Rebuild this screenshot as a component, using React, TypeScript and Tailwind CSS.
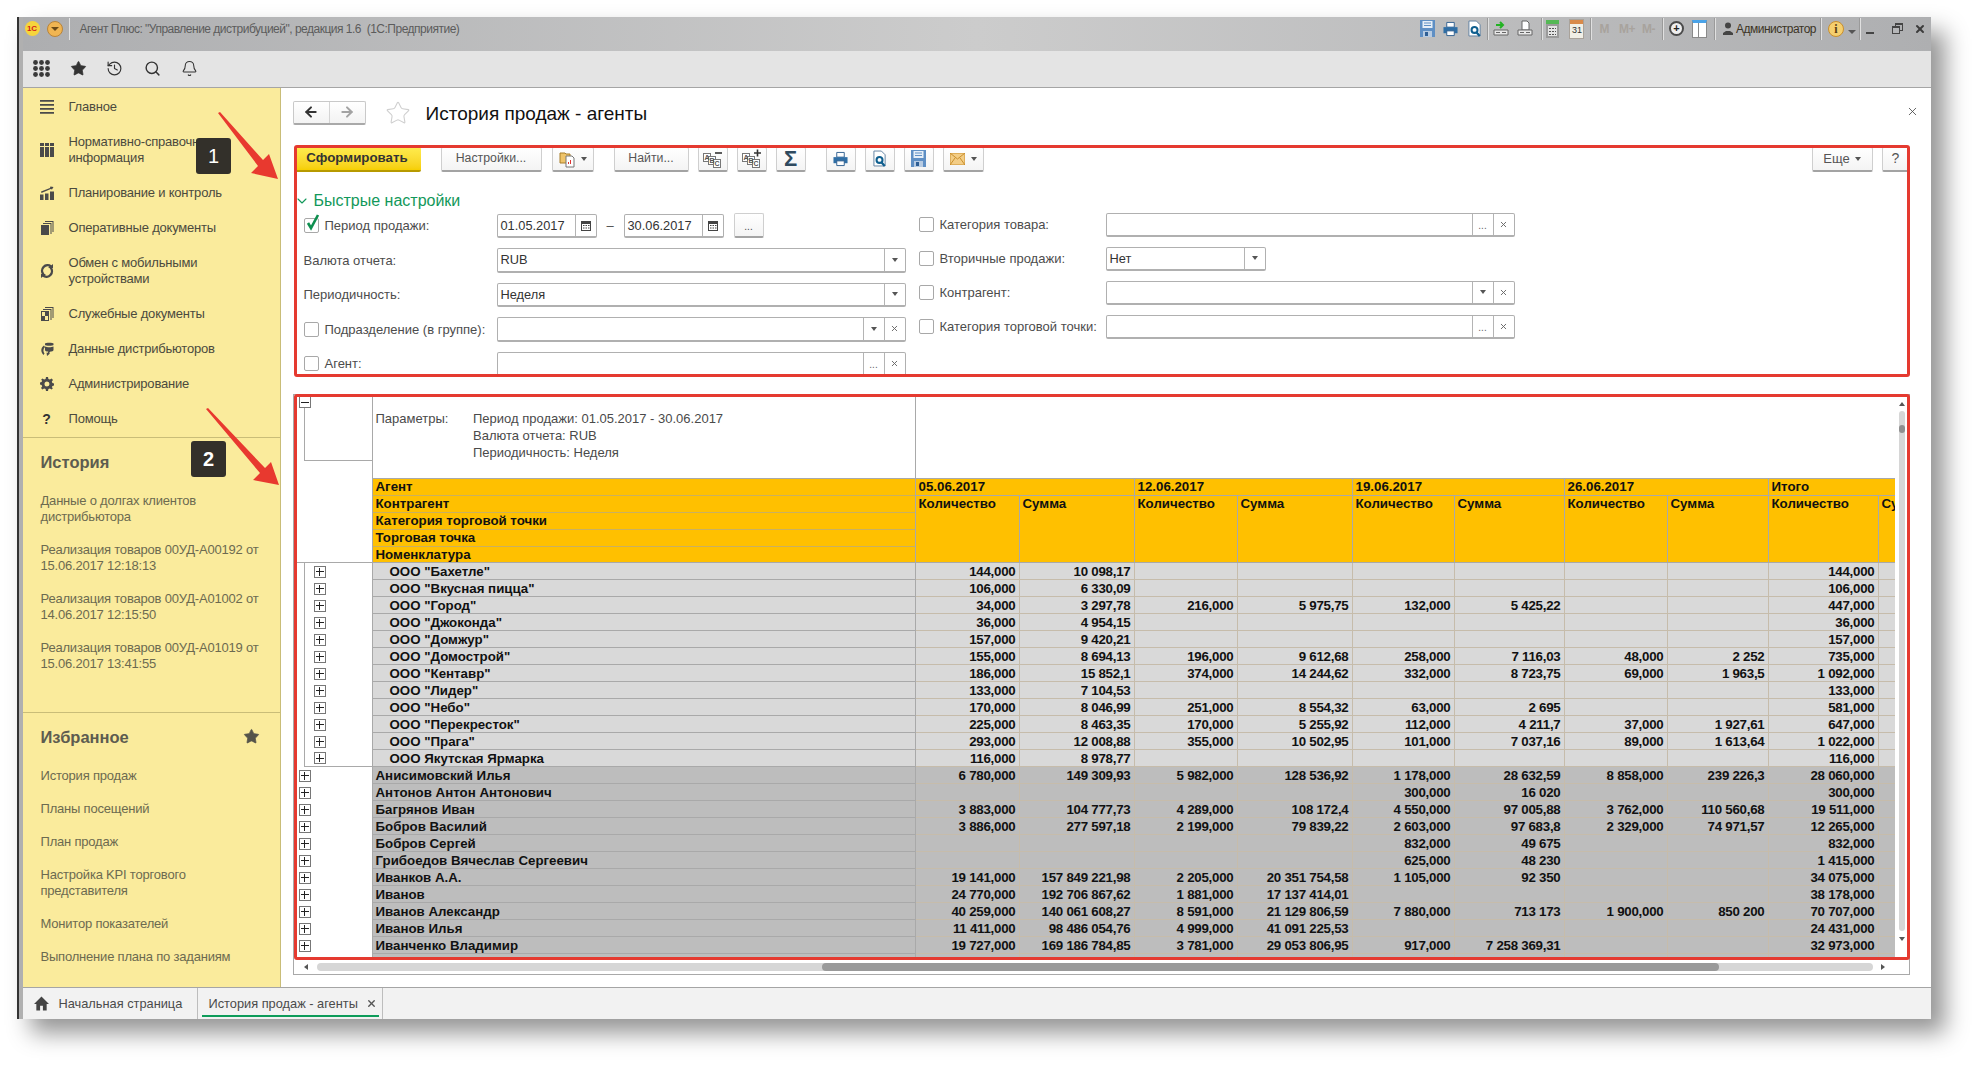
import React from 'react';
import { ArrowLeft, ArrowRight, Bell, ChevronDown, History, Search, Star, X } from 'lucide-react';

const sideMain: { label: string[]; icon: string }[] = [
  { label: ['Главное'], icon: 'menu' },
  { label: ['Нормативно-справочная', 'информация'], icon: 'books' },
  { label: ['Планирование и контроль'], icon: 'chart' },
  { label: ['Оперативные документы'], icon: 'docs' },
  { label: ['Обмен с мобильными', 'устройствами'], icon: 'sync' },
  { label: ['Служебные документы'], icon: 'service' },
  { label: ['Данные дистрибьюторов'], icon: 'dist' },
  { label: ['Администрирование'], icon: 'gear' },
  { label: ['Помощь'], icon: 'help' },
];

const historyItems = [
  ['Данные о долгах клиентов', 'дистрибьютора'],
  ['Реализация товаров 00УД-А00192 от', '15.06.2017 12:18:13'],
  ['Реализация товаров 00УД-А01002 от', '14.06.2017 12:15:50'],
  ['Реализация товаров 00УД-А01019 от', '15.06.2017 13:41:55'],
];

const favItems = [
  ['История продаж'],
  ['Планы посещений'],
  ['План продаж'],
  ['Настройка KPI торгового', 'представителя'],
  ['Монитор показателей'],
  ['Выполнение плана по заданиям'],
];

const subRows: string[][] = [
  ['ООО "Бахетле"', '144,000', '10 098,17', '', '', '', '', '', '', '144,000'],
  ['ООО "Вкусная пицца"', '106,000', '6 330,09', '', '', '', '', '', '', '106,000'],
  ['ООО "Город"', '34,000', '3 297,78', '216,000', '5 975,75', '132,000', '5 425,22', '', '', '447,000'],
  ['ООО "Джоконда"', '36,000', '4 954,15', '', '', '', '', '', '', '36,000'],
  ['ООО "Домжур"', '157,000', '9 420,21', '', '', '', '', '', '', '157,000'],
  ['ООО "Домострой"', '155,000', '8 694,13', '196,000', '9 612,68', '258,000', '7 116,03', '48,000', '2 252', '735,000'],
  ['ООО "Кентавр"', '186,000', '15 852,1', '374,000', '14 244,62', '332,000', '8 723,75', '69,000', '1 963,5', '1 092,000'],
  ['ООО "Лидер"', '133,000', '7 104,53', '', '', '', '', '', '', '133,000'],
  ['ООО "Небо"', '170,000', '8 046,99', '251,000', '8 554,32', '63,000', '2 695', '', '', '581,000'],
  ['ООО "Перекресток"', '225,000', '8 463,35', '170,000', '5 255,92', '112,000', '4 211,7', '37,000', '1 927,61', '647,000'],
  ['ООО "Прага"', '293,000', '12 008,88', '355,000', '10 502,95', '101,000', '7 037,16', '89,000', '1 613,64', '1 022,000'],
  ['ООО Якутская Ярмарка', '116,000', '8 978,77', '', '', '', '', '', '', '116,000'],
];

const agentRows: string[][] = [
  ['Анисимовский Илья', '6 780,000', '149 309,93', '5 982,000', '128 536,92', '1 178,000', '28 632,59', '8 858,000', '239 226,3', '28 060,000'],
  ['Антонов Антон Антонович', '', '', '', '', '300,000', '16 020', '', '', '300,000'],
  ['Багрянов Иван', '3 883,000', '104 777,73', '4 289,000', '108 172,4', '4 550,000', '97 005,88', '3 762,000', '110 560,68', '19 511,000'],
  ['Бобров Василий', '3 886,000', '277 597,18', '2 199,000', '79 839,22', '2 603,000', '97 683,8', '2 329,000', '74 971,57', '12 265,000'],
  ['Бобров Сергей', '', '', '', '', '832,000', '49 675', '', '', '832,000'],
  ['Грибоедов Вячеслав Сергеевич', '', '', '', '', '625,000', '48 230', '', '', '1 415,000'],
  ['Иванков А.А.', '19 141,000', '157 849 221,98', '2 205,000', '20 351 754,58', '1 105,000', '92 350', '', '', '34 075,000'],
  ['Иванов', '24 770,000', '192 706 867,62', '1 881,000', '17 137 414,01', '', '', '', '', '38 178,000'],
  ['Иванов Александр', '40 259,000', '140 061 608,27', '8 591,000', '21 129 806,59', '7 880,000', '713 173', '1 900,000', '850 200', '70 707,000'],
  ['Иванов Илья', '11 411,000', '98 486 054,76', '4 999,000', '41 091 225,53', '', '', '', '', '24 431,000'],
  ['Иванченко Владимир', '19 727,000', '169 186 784,85', '3 781,000', '29 053 806,95', '917,000', '7 258 369,31', '', '', '32 973,000'],
  ['Кузнецов Борис', '9 349,000', '99 480', '5 230,000', '155 330,9', '9 789,000', '189 240,8', '8 858,000', '189 784,85', '38 190,000'],
];

const headLabels = ['Агент', 'Контрагент', 'Категория торговой точки', 'Торговая точка', 'Номенклатура'];
const cols = 'grid grid-cols-[104px_115px_103px_115px_102px_110px_103px_101px_110px_19px]';

function SideIcon({ name }: { name: string }) {
  if (name === 'help') return <span className="w-[14px] text-center text-[14px] font-bold text-[#333]">?</span>;
  if (name === 'sync') {
    return (
      <svg viewBox="0 0 14 16" className="h-[16px] w-[14px]" fill="none" stroke="#4a4a4a" strokeWidth="2.400">
        <path d="M11 3.500A5.500 5.500 0 0 0 3.500 11.500" />
        <path d="M3 12.500A5.500 5.500 0 0 0 10.500 4.500" />
        <path d="M8 5h5V1zM6 11H1v4z" fill="#4a4a4a" stroke="none" />
      </svg>
    );
  }
  return (
    <svg viewBox="0 0 14 14" className="h-[14px] w-[14px]" fill="#4a4a4a">
      {name === 'menu' && <path d="M0 0h14v1.800H0zM0 4h14v1.800H0zM0 8h14v1.800H0zM0 12h14v1.800H0z" />}
      {name === 'books' && <path d="M0 0h4v3H0zM5 0h4v3H5zM10 0h4v3h-4zM0 4h4v10H0zM5 4h4v10H5zM10 4h4v10h-4z" />}
      {name === 'chart' && <path d="M0 8.500h3.500V14H0zM5 7.500h3.500V14H5zM10 5.500h4V14h-4zM1 5.500l9-3.500.4-1.500 3.100.6-1.500 2.400-1.200-.6L1.500 7z" />}
      {name === 'docs' && <path fillRule="evenodd" d="M5 0h8.500v11h-1V1H5zM3 2h8.500v11h-1V3H3zM1 4h8v10H1z" />}
      {name === 'service' && <path fillRule="evenodd" d="M5 0h8.500v11h-1V1H5zM3 2h8.500v11h-1V3H3zM1 4h8v10H1zM5 5v4H2V5zM5 9h3v4H5z" />}
      {name === 'dist' && <path d="M5 1.500C5 .500 13.500.500 13.500 1.500V3C13.500 4 5 4 5 3zM5 4.500c2 1 6.500 1 8.500 0V8c0 1-2 1.500-3 1.500L9 11l1 .500L7 14l-.5-3.500 1 .5.8-1.500C6.500 9.500 5 9 5 8zM4 3.500 5 5C3 7 3 9.500 4.500 11.500L3.500 13C.5 10 .5 6 4 3.500z" />}
      {name === 'gear' && <path fillRule="evenodd" d="M6 0h2l.4 2 1.500.6L11.600 1.500 13 3l-1.200 1.600.6 1.500 1.600.4v2l-1.600.4-.6 1.500L13 11l-1.400 1.500-1.700-1.100-1.500.6L8 14H6l-.4-2-1.500-.6-1.700 1.100L1 11l1.200-1.600-.6-1.500L0 7.500v-2l1.600-.4.6-1.500L1 3l1.400-1.500 1.700 1.100 1.500-.6zM7 4.500a2.500 2.500 0 1 0 0 5 2.500 2.500 0 0 0 0-5z" />}
    </svg>
  );
}

function BarSep() {
  return <div className="h-[22px] w-[2px] border-r border-[#e0e0e0] bg-[#9a9a9a]" />;
}

function FloppyIcon({ className }: { className: string }) {
  return (
    <svg viewBox="0 0 15 17" className={className}>
      <path d="M0 0h15v17H0z" fill="#5f8fc4" />
      <path d="M2.500 1h10v7h-10z" fill="#e6eef7" />
      <path d="M4 3h7M4 5.500h7" stroke="#5f8fc4" />
      <path d="M3 11h9v6H3z" fill="#b7cbe2" />
      <path d="M5 12h3v4H5z" fill="#2f5f95" />
    </svg>
  );
}

function PrinterIcon({ className }: { className: string }) {
  return (
    <svg viewBox="0 0 16 16" className={className}>
      <path d="M4 1h8v5H4z" fill="#fff" stroke="#2f5f8f" />
      <path d="M0.500 6h15v6.500H.5z" fill="#2f6ea5" />
      <path d="M4 10h8v5H4z" fill="#fff" stroke="#2f5f8f" />
    </svg>
  );
}

function PreviewIcon({ className }: { className: string }) {
  return (
    <svg viewBox="0 0 15 18" className={className}>
      <path d="M1 1h8l4 4v12H1z" fill="#fff" stroke="#5f7f9f" />
      <circle cx="7" cy="10.500" r="3.200" fill="none" stroke="#0f5f8f" strokeWidth="2.200" />
      <path d="M9 13 12.500 17" stroke="#0f5f8f" strokeWidth="2.400" />
    </svg>
  );
}

function AbcIcon({ sign }: { sign: string }) {
  return (
    <svg viewBox="0 0 20 20" className="h-[20px] w-[20px]" fontSize="7" fontWeight="bold" fontFamily="Liberation Sans, sans-serif" fill="#555">
      <rect x="0.500" y="4.500" width="7" height="8" fill="#fff" stroke="#777" />
      <rect x="5.500" y="7.500" width="7" height="8" fill="#fff" stroke="#777" />
      <rect x="10.500" y="10.500" width="7" height="8" fill="#fff" stroke="#777" />
      <text x="1.500" y="11">A</text>
      <text x="6.500" y="14">B</text>
      <text x="11.500" y="17">C</text>
      <path d={sign === '+' ? 'M12 4h7M15.500 .5v7' : 'M12 4h7'} stroke="#333" strokeWidth="1.600" />
    </svg>
  );
}

function TitleBar() {
  return (
    <div className="flex h-[34px] shrink-0 items-center bg-gradient-to-r from-[#adaeb0] via-[#cccccc] to-[#aeafb1] pb-[11px] pl-[2px]">
      <div className="flex h-[15px] w-[15px] items-center justify-center rounded-full bg-[#f6d53c] text-[8px] font-bold text-[#d3201a]">1С</div>
      <div className="ml-[7px] flex h-[16px] w-[16px] items-center justify-center rounded-full border border-[#b9843a] bg-[#f0b552]">
        <div className="h-0 w-0 border-x-[4px] border-t-[4px] border-x-transparent border-t-[#6b4a17]" />
      </div>
      <div className="ml-[6px] h-[22px] w-px bg-[#e2e2e2]" />
      <span className="ml-[10px] whitespace-pre text-[12px] tracking-[-0.5px] text-[#5c5c5c]">Агент Плюс: "Управление дистрибуцией", редакция 1.6  (1С:Предприятие)</span>
      <div className="ml-auto flex items-center pr-[5px]">
        <FloppyIcon className="h-[17px] w-[15px]" />
        <PrinterIcon className="ml-[8px] h-[16px] w-[15px]" />
        <PreviewIcon className="ml-[10px] h-[17px] w-[14px]" />
        <div className="ml-[5px]"><BarSep /></div>
        <svg viewBox="0 0 16 17" className="ml-[4px] h-[17px] w-[16px]">
          <path d="M1 10h14v5H1z" fill="#e8e8e8" stroke="#666" />
          <path d="M3 5h7M7 2l3 3-3 3" fill="none" stroke="#23b323" strokeWidth="2" />
          <path d="M3 12h4v1H3zM9 12h4v1H9z" fill="#666" />
        </svg>
        <svg viewBox="0 0 16 17" className="ml-[8px] h-[17px] w-[16px]">
          <path d="M5 1h5l2 2v7H5z" fill="#fff" stroke="#666" />
          <path d="M1 10h14v5H1z" fill="#e8e8e8" stroke="#666" />
          <path d="M3 12h4v1H3zM9 12h4v1H9z" fill="#666" />
        </svg>
        <div className="ml-[8px]"><BarSep /></div>
        <svg viewBox="0 0 13 18" className="ml-[3px] h-[18px] w-[13px]">
          <path d="M0 0h13v18H0z" fill="#9a9a9a" />
          <path d="M0 0h13v4H0z" fill="#55b855" />
          <path d="M2 6h9v10H2z" fill="#e4e4e4" />
          <path d="M3 8h2v1H3zM6 8h2v1H6zM9 8h1v1H9zM3 11h2v1H3zM6 11h2v1H6zM9 11h1v1H9zM3 14h2v1H3zM6 14h2v1H6zM9 14h1v1H9z" fill="#555" />
        </svg>
        <div className="ml-[11px] flex h-[18px] w-[13px] flex-col items-center bg-[#f1efe6] shadow-[0_0_0_1px_#a9a29a]">
          <div className="h-[4px] w-full bg-[#d98a4a]" />
          <span className="text-[9px] leading-[13px] text-[#333]">31</span>
        </div>
        <div className="ml-[7px]"><BarSep /></div>
        <span className="ml-[7px] text-[12px] font-bold tracking-[-0.5px] text-[#a8a39d]">M</span>
        <span className="ml-[10px] text-[12px] font-bold tracking-[-0.5px] text-[#a8a39d]">M+</span>
        <span className="ml-[7px] text-[12px] font-bold tracking-[-0.5px] text-[#a8a39d]">M-</span>
        <div className="ml-[7px]"><BarSep /></div>
        <div className="ml-[5px] flex h-[15px] w-[15px] items-center justify-center rounded-full border-2 border-[#4a4a4a] bg-[#eee] text-[11px] font-bold leading-none text-[#222]">+</div>
        <div className="ml-[8px] flex h-[18px] w-[15px] border border-t-[3px] border-[#8a8a8a] border-t-[#4aa3e8] bg-white">
          <div className="w-1/2 border-r border-[#8a8a8a]" />
        </div>
        <div className="ml-[7px]"><BarSep /></div>
        <svg viewBox="0 0 10 13" className="ml-[7px] h-[13px] w-[10px]" fill="#444">
          <circle cx="5" cy="3.500" r="3" />
          <path d="M0 13v-2l3-2h4l3 2v2z" />
        </svg>
        <span className="ml-[3px] text-[12px] tracking-[-0.5px] text-[#3c3426]">Администратор</span>
        <div className="ml-[4px]"><BarSep /></div>
        <div className="ml-[6px] flex h-[16px] w-[16px] items-center justify-center rounded-full border border-[#c98f2e] bg-[#f5cf6e] font-['Liberation_Serif',serif] text-[12px] font-bold leading-none text-[#5a3c10]">i</div>
        <div className="ml-[4px] mt-[6px] h-0 w-0 border-x-[4px] border-t-[4px] border-x-transparent border-t-[#555]" />
        <div className="ml-[3px]"><BarSep /></div>
        <div className="ml-[5px] mt-[8px] h-[2px] w-[8px] bg-[#444]" />
        <div className="relative ml-[18px] h-[11px] w-[11px]">
          <div className="absolute right-0 top-0 h-[8px] w-[8px] border border-t-2 border-[#444]" />
          <div className="absolute bottom-0 left-0 h-[8px] w-[8px] border border-t-2 border-[#444] bg-[#b5b6b8]" />
        </div>
        <X className="ml-[11px] h-[12px] w-[12px] text-[#3c3c3c]" strokeWidth={4} />
      </div>
    </div>
  );
}

function TopBar() {
  return (
    <div className="flex h-[36.500px] shrink-0 items-center border-b border-[#a5a5a5] bg-[#e4e4e4] pl-[10px] text-[#333]">
      <svg viewBox="0 0 17 17" className="h-[17px] w-[17px]" fill="#3a3a3a">
        {[2.500, 8.500, 14.500].map((y) => [2.500, 8.500, 14.500].map((x) => <circle key={`${x}-${y}`} cx={x} cy={y} r="2.400" />))}
      </svg>
      <Star className="ml-[20px] h-[17px] w-[17px]" fill="#333" strokeWidth={1} />
      <History className="ml-[19px] h-[17px] w-[17px]" strokeWidth={1.600} />
      <Search className="ml-[21px] h-[17px] w-[17px]" strokeWidth={2} />
      <Bell className="ml-[20px] h-[17px] w-[17px]" strokeWidth={1.500} />
    </div>
  );
}

function Sidebar() {
  return (
    <div className="flex w-[258px] shrink-0 flex-col border-r border-[#c9bd78] bg-[#faeb9c] text-[13px] leading-4 tracking-[-0.2px]">
      <div className="border-b border-[#c9bd78] pt-[2px]">
        {sideMain.map((it) => (
          <div key={it.label[0]} className="flex items-center py-[9.500px] pl-[17px] text-[#4b4a3e]">
            <SideIcon name={it.icon} />
            <div className="ml-[15px]">
              {it.label.map((l) => <div key={l}>{l}</div>)}
            </div>
          </div>
        ))}
      </div>
      <div className="h-[275px] border-b border-[#c9bd78] pl-[18px] pt-[14.500px] text-[#6c6a50]">
        <div className="text-[16.500px] font-bold leading-5 tracking-normal text-[#5d5c50]">История</div>
        <div className="mt-[21px] flex flex-col gap-[17px]">
          {historyItems.map((it) => (
            <div key={it[0] + it[1]}>
              {it.map((l) => <div key={l}>{l}</div>)}
            </div>
          ))}
        </div>
      </div>
      <div className="flex-1 pl-[18px] pr-[20px] pt-[14px] text-[#6c6a50]">
        <div className="flex items-center justify-between text-[16.500px] font-bold leading-5 tracking-normal text-[#5d5c50]">
          Избранное
          <Star className="h-[17px] w-[17px] text-[#55544a]" fill="#55544a" strokeWidth={1} />
        </div>
        <div className="mt-[21.500px] flex flex-col gap-[17px]">
          {favItems.map((it) => (
            <div key={it[0]}>
              {it.map((l) => <div key={l}>{l}</div>)}
            </div>
          ))}
        </div>
      </div>
    </div>
  );
}

function ToolBtn({ className, children }: { className: string; children: React.ReactNode }) {
  return (
    <div className={`flex h-[25px] items-center justify-center rounded-[2px] border border-b-2 border-[#cfcfcf] border-b-[#a3a3a3] bg-gradient-to-b from-white to-[#f4f4f4] ${className}`}>
      {children}
    </div>
  );
}

function Caret() {
  return <div className="h-0 w-0 border-x-[3.500px] border-t-[4px] border-x-transparent border-t-[#555]" />;
}

function ReportToolbar() {
  return (
    <div className="flex h-[25px] items-start text-[12.300px] text-[#555]">
      <div className="flex h-[25px] w-[127px] items-center justify-center rounded-[2px] border-b-2 border-b-[#b79a00] bg-gradient-to-b from-[#ffec4d] to-[#f6cf00] text-[13.300px] font-bold text-[#333]">Сформировать</div>
      <ToolBtn className="ml-[20px] w-[101px]">Настройки...</ToolBtn>
      <ToolBtn className="ml-[10px] w-[42px] gap-[6px]">
        <svg viewBox="0 0 16 18" className="h-[18px] w-[16px]">
          <path d="M1 3h5l1 1h4v9H1z" fill="#efc46a" stroke="#a87f2b" />
          <path d="M7 6h6l2 2v9H7z" fill="#fff" stroke="#777" />
          <path d="M9 14v-2h1v2zM11 14v-4h1v4z" fill="#d33" />
        </svg>
        <Caret />
      </ToolBtn>
      <ToolBtn className="ml-[20px] w-[75px]">Найти...</ToolBtn>
      <ToolBtn className="ml-[9px] w-[30px]"><AbcIcon sign="-" /></ToolBtn>
      <ToolBtn className="ml-[9px] w-[30px]"><AbcIcon sign="+" /></ToolBtn>
      <ToolBtn className="ml-[9px] w-[30px] text-[22px] font-bold text-[#2f4a5f]">Σ</ToolBtn>
      <ToolBtn className="ml-[20px] w-[30px]"><PrinterIcon className="h-[16px] w-[15px]" /></ToolBtn>
      <ToolBtn className="ml-[9px] w-[30px]"><PreviewIcon className="h-[17px] w-[14px]" /></ToolBtn>
      <ToolBtn className="ml-[9px] w-[30px]"><FloppyIcon className="h-[17px] w-[15px]" /></ToolBtn>
      <ToolBtn className="ml-[9px] w-[41px] gap-[6px]">
        <svg viewBox="0 0 15 12" className="h-[12px] w-[15px]">
          <path d="M0 0h15v12H0z" fill="#f3cd86" stroke="#c98f2e" />
          <path d="m0 0 7.500 6L15 0M0 12l5-7M15 12l-5-7" fill="none" stroke="#c98f2e" />
        </svg>
        <Caret />
      </ToolBtn>
      <ToolBtn className="ml-auto w-[61px] gap-[5px] text-[13px]">Еще <Caret /></ToolBtn>
      <ToolBtn className="ml-[9px] w-[28px] text-[14px]">?</ToolBtn>
    </div>
  );
}

function Check({ on }: { on?: boolean }) {
  return (
    <div className="relative h-[15px] w-[15px] shrink-0 rounded-[2px] border border-[#a8a8a8] bg-white">
      {on && (
        <svg viewBox="0 0 15 17" className="absolute -top-[5px] left-0 h-[17px] w-[15px]">
          <path d="M3 9l3 5 7-13" fill="none" stroke="#0e8f4f" strokeWidth="2.600" />
        </svg>
      )}
    </div>
  );
}

function CalIcon() {
  return (
    <svg viewBox="0 0 10 11" className="h-[11px] w-[10px]">
      <path d="M0 1h10v10H0z" fill="#444" />
      <path d="M1 4h8v6H1z" fill="#fff" />
      <path d="M2 5h1.500v1H2zM4.500 5H6v1H4.500zM7 5h1.500v1H7zM2 7.500h1.500v1H2zM4.500 7.500H6v1H4.500zM7 7.500h1.500v1H7z" fill="#444" />
    </svg>
  );
}

function FieldBtn({ children }: { children: React.ReactNode }) {
  return (
    <div className="flex h-full w-[21px] shrink-0 items-center justify-center border-l border-[#b4b4b4] text-[#666]">{children}</div>
  );
}

function Dots() {
  return <span className="mt-[4px] text-[10px] leading-none">...</span>;
}

function Field({ className, value, btns }: { className: string; value?: string; btns: string[] }) {
  return (
    <div className={`flex h-[24.500px] items-center rounded-[2px] border border-b-2 border-[#b0b0b0] bg-white pl-[3px] text-[12.800px] text-[#333] ${className}`}>
      <span className="flex-1 whitespace-nowrap">{value}</span>
      {btns.map((b, i) => (
        <FieldBtn key={i}>
          {b === 'v' && <Caret />}
          {b === 'x' && <X className="h-[9px] w-[9px]" strokeWidth={2.500} />}
          {b === '.' && <Dots />}
          {b === 'c' && <CalIcon />}
        </FieldBtn>
      ))}
    </div>
  );
}

function QuickSettings() {
  return (
    <div className="text-[13px] text-[#4c4c4c]">
      <div className="mt-[17px] flex h-[24px] items-center text-[16px] text-[#12985a]">
        <ChevronDown className="h-[16px] w-[16px]" strokeWidth={1.600} />
        <span className="ml-[4px]">Быстрые настройки</span>
      </div>
      <div className="mt-[1px] flex">
        <div className="flex w-[625px] flex-col gap-[10px] pl-[10px]">
          <div className="flex h-[24.500px] items-center">
            <Check on />
            <span className="ml-[6px] w-[172px]">Период продажи:</span>
            <Field className="w-[100px]" value="01.05.2017" btns={['c']} />
            <span className="w-[27px] text-center">–</span>
            <Field className="w-[100px]" value="30.06.2017" btns={['c']} />
            <ToolBtn className="ml-[10px] w-[30px]"><Dots /></ToolBtn>
          </div>
          <div className="flex h-[24.500px] items-center">
            <span className="w-[193px]">Валюта отчета:</span>
            <Field className="w-[409px]" value="RUB" btns={['v']} />
          </div>
          <div className="flex h-[24.500px] items-center">
            <span className="w-[193px]">Периодичность:</span>
            <Field className="w-[409px]" value="Неделя" btns={['v']} />
          </div>
          <div className="flex h-[24.500px] items-center">
            <Check />
            <span className="ml-[6px] w-[172px] whitespace-nowrap">Подразделение (в группе):</span>
            <Field className="w-[409px]" btns={['v', 'x']} />
          </div>
          <div className="flex h-[24.500px] items-center">
            <Check />
            <span className="ml-[6px] w-[172px]">Агент:</span>
            <Field className="w-[409px]" btns={['.', 'x']} />
          </div>
        </div>
        <div className="-mt-[1px] flex flex-col gap-[9.500px]">
          {[
            { label: 'Категория товара:', btns: ['.', 'x'], w: 'w-[409px]' },
            { label: 'Вторичные продажи:', btns: ['v'], w: 'w-[160px]', value: 'Нет' },
            { label: 'Контрагент:', btns: ['v', 'x'], w: 'w-[409px]' },
            { label: 'Категория торговой точки:', btns: ['.', 'x'], w: 'w-[409px]' },
          ].map((r) => (
            <div key={r.label} className="flex h-[24.500px] items-center">
              <Check />
              <span className="ml-[6px] w-[166px] whitespace-nowrap">{r.label}</span>
              <Field className={r.w} value={r.value} btns={r.btns} />
            </div>
          ))}
        </div>
      </div>
    </div>
  );
}

function PlusBox({ minus }: { minus?: boolean }) {
  return (
    <div className="relative h-[12px] w-[12px] shrink-0 border border-[#777] bg-white">
      <div className="absolute left-[1px] top-[4.500px] h-px w-[8px] bg-[#222]" />
      {!minus && <div className="absolute left-[4.500px] top-[1px] h-[8px] w-px bg-[#222]" />}
    </div>
  );
}

function DataCells({ row, dark }: { row: string[]; dark?: boolean }) {
  return (
    <div className={`${cols} ${dark ? 'bg-[#bdbdbd]' : 'bg-[#d9d9d9]'}`}>
      {row.slice(1).concat('').map((v, i) => (
        <div key={i} className="h-[17px] whitespace-nowrap border-b border-r border-[#c6bcab] pr-[3px] text-right leading-[17px] tracking-[-0.25px]">{v}</div>
      ))}
    </div>
  );
}

function ReportTable() {
  return (
    <div className="relative mt-[18px] h-[581px] w-[1617px] overflow-hidden border border-[#a9a9a9] pl-[2px] font-bold">
      <div className="h-[564px] overflow-hidden pt-[1px] text-[13.300px] text-[#111]">
        {/* Param block */}
        <div className="flex h-[82px] text-[13px] font-normal text-[#4a4a4a]">
          <div className="relative w-[77px] shrink-0 border-r border-[#a9a9a9]">
            <div className="absolute left-[8px] top-[8px] h-[57px] w-[69px] border-b border-l border-[#a9a9a9]" />
            <div className="absolute left-[3px] top-0"><PlusBox minus /></div>
          </div>
          <div className="flex w-[543px] shrink-0 border-r border-[#a9a9a9] pl-[3px] pt-[14px] leading-[17px]">
            <span className="w-[97.500px]">Параметры:</span>
            <div>
              <div>Период продажи: 01.05.2017 - 30.06.2017</div>
              <div>Валюта отчета: RUB</div>
              <div>Периодичность: Неделя</div>
            </div>
          </div>
        </div>
        {/* Header */}
        <div className="flex h-[85px]">
          <div className="w-[77px] shrink-0 border-b border-r border-[#a9a9a9]" />
          <div className="w-[543px] shrink-0 border-y border-r border-[#a9a9a9] bg-[#ffc000]">
            {headLabels.map((h, i) => (
              <div key={h} className={`pl-[3px] leading-[16px] ${i < 4 ? 'h-[17px] border-b border-[#c9b060]' : 'h-[15px]'}`}>{h}</div>
            ))}
          </div>
          <div className="flex w-[982px] flex-col border-y border-[#a9a9a9] bg-[#ffc000]">
            <div className="grid h-[17px] grid-cols-[219px_218px_212px_204px_129px] border-b border-[#a9a9a9] leading-[16px]">
              {['05.06.2017', '12.06.2017', '19.06.2017', '26.06.2017', 'Итого'].map((d) => (
                <div key={d} className="border-r border-[#a9a9a9] pl-[3px]">{d}</div>
              ))}
            </div>
            <div className={`${cols} flex-1`}>
              {['Количество', 'Сумма', 'Количество', 'Сумма', 'Количество', 'Сумма', 'Количество', 'Сумма', 'Количество', 'Су'].map((c, i) => (
                <div key={i} className="overflow-hidden whitespace-nowrap border-r border-[#a9a9a9] pl-[3px] leading-[16px]">{c}</div>
              ))}
            </div>
          </div>
        </div>
        {/* Contractors */}
        {subRows.map((r, i) => (
          <div key={r[0]} className="flex h-[17px]">
            <div className="w-[77px] shrink-0 border-r border-[#a9a9a9] pl-[8px]">
              <div className={`flex h-full items-center border-l border-[#a9a9a9] pl-[9px] ${i === subRows.length - 1 ? 'border-b' : ''}`}>
                <PlusBox />
              </div>
            </div>
            <div className="w-[543px] shrink-0 border-b border-r border-[#a9a9a9] bg-[#d9d9d9] pl-[17px] leading-[17px]">{r[0]}</div>
            <DataCells row={r} />
          </div>
        ))}
        {/* Agents */}
        {agentRows.map((r) => (
          <div key={r[0]} className="flex h-[17px]">
            <div className="flex w-[77px] shrink-0 items-center border-r border-[#a9a9a9] pl-[3px]"><PlusBox /></div>
            <div className="w-[543px] shrink-0 border-b border-r border-[#a9a9a9] bg-[#bdbdbd] pl-[3px] leading-[17px]">{r[0]}</div>
            <DataCells row={r} dark />
          </div>
        ))}
      </div>
      {/* Horizontal scroll */}
      <div className="flex h-[15px] items-center bg-white">
        <div className="ml-[8px] h-0 w-0 border-y-[3.500px] border-r-[4px] border-y-transparent border-r-[#555]" />
        <div className="ml-[9px] flex h-[8px] w-[1556px] rounded-full bg-[#d6d6d6]">
          <div className="ml-[505px] h-full w-[897px] rounded-full bg-[#9a9a9a]" />
        </div>
        <div className="ml-[8px] h-0 w-0 border-y-[3.500px] border-l-[4px] border-y-transparent border-l-[#555]" />
      </div>
      {/* Vertical scroll */}
      <div className="absolute bottom-[15px] right-0 top-0 flex w-[14px] flex-col items-center bg-white pt-[7px]">
        <div className="h-0 w-0 border-x-[3.500px] border-b-[4px] border-x-transparent border-b-[#555]" />
        <div className="mt-[5px] h-[520px] w-[6px] rounded-full bg-[#d6d6d6]">
          <div className="mt-[14px] h-[8px] w-[6px] rounded-full bg-[#8f8f8f]" />
        </div>
        <div className="mt-[6px] h-0 w-0 border-x-[3.500px] border-t-[4px] border-x-transparent border-t-[#555]" />
      </div>
    </div>
  );
}

function Content() {
  return (
    <div className="relative min-w-0 flex-1 bg-white pl-[12px] pt-[13px]">
      <div className="flex h-[24px] items-center">
        <div className="flex h-[24px] w-[73px] rounded-[2px] border border-b-2 border-[#c9c9c9] border-b-[#a9a9a9] bg-gradient-to-b from-white to-[#f3f3f3]">
          <div className="flex flex-1 items-center justify-center border-r border-[#d4d4d4]">
            <ArrowLeft className="h-[16px] w-[16px] text-[#333]" strokeWidth={3} />
          </div>
          <div className="flex flex-1 items-center justify-center">
            <ArrowRight className="h-[16px] w-[16px] text-[#a3a3a3]" strokeWidth={3} />
          </div>
        </div>
        <Star className="ml-[19px] h-[26px] w-[26px] text-[#cfcfcf]" strokeWidth={1} />
        <h1 className="ml-[15px] mt-[3px] text-[19px] font-normal text-[#111]">История продаж - агенты</h1>
        <X className="absolute right-[12px] top-[17px] h-[13px] w-[13px] text-[#444]" strokeWidth={1.500} />
      </div>
      <div className="ml-[1px] mt-[22px] w-[1616px]">
        <ReportToolbar />
        <QuickSettings />
      </div>
      <ReportTable />
    </div>
  );
}

function TabBar() {
  return (
    <div className="flex h-[32px] shrink-0 border-t border-[#a5a5a5] bg-[#f2f2f2] text-[12.800px] text-[#4b4b4b]">
      <div className="flex w-[175px] items-center border-r border-[#bdbdbd] pl-[11px]">
        <svg viewBox="0 0 16 15" className="h-[15px] w-[15px]" fill="#444">
          <path d="M8 0 0 8h2.500v7H6.500v-5h3v5h4V8H16z" />
        </svg>
        <span className="ml-[10px]">Начальная страница</span>
      </div>
      <div className="relative flex w-[185px] items-center border-r border-[#bdbdbd] pl-[11px]">
        <span>История продаж - агенты</span>
        <X className="ml-[8px] h-[11px] w-[11px] text-[#555]" strokeWidth={3} />
        <div className="absolute bottom-[2px] left-[4px] h-[2px] w-[177px] bg-[#0e9c5a]" />
      </div>
    </div>
  );
}

function Arrow({ className, points }: { className: string; points: string }) {
  return (
    <svg viewBox="0 0 80 80" className={`pointer-events-none absolute h-[80px] w-[80px] overflow-visible ${className}`}>
      <polygon points={points} fill="#e8392f" />
    </svg>
  );
}

export default function App() {
  return (
    <div className="relative h-[1068px] w-[1980px] overflow-hidden bg-white pl-[17px] pt-[17px] font-['Liberation_Sans',sans-serif]">
      <div className="flex h-[1002px] w-[1914px] border-l-[2.500px] border-[#333] bg-white shadow-[14px_14px_22px_rgba(0,0,0,0.42)]">
        <div className="w-[3.500px] shrink-0 bg-[#b0b0b0]" />
        <div className="flex min-w-0 flex-1 flex-col">
          <TitleBar />
          <TopBar />
          <div className="flex min-h-0 flex-1">
            <Sidebar />
            <Content />
          </div>
          <TabBar />
        </div>
      </div>

      {/* Annotations over the screenshot */}
      <div className="pointer-events-none absolute left-[294px] top-[145px] h-[232px] w-[1616px] rounded-[3px] border-[3px] border-[#e53a30]" />
      <div className="pointer-events-none absolute left-[294px] top-[394px] h-[566px] w-[1616px] rounded-[3px] border-[3px] border-[#e53a30]" />
      <div className="absolute left-[196px] top-[138px] flex h-[36px] w-[35px] items-center justify-center rounded-[3px] bg-[#33302a] text-[20px] text-white">1</div>
      <div className="absolute left-[191px] top-[441px] flex h-[36px] w-[35px] items-center justify-center rounded-[3px] bg-[#33302a] text-[20px] font-bold text-white">2</div>
      <Arrow className="left-[208px] top-[108px]" points="10,5 12,4 55,52 61,46 70,71 43,65 50,58" />
      <Arrow className="left-[209px] top-[414px]" points="-3,-5 -1,-6 56,54 62,48 70,71 44,66 51,59" />
    </div>
  );
}
